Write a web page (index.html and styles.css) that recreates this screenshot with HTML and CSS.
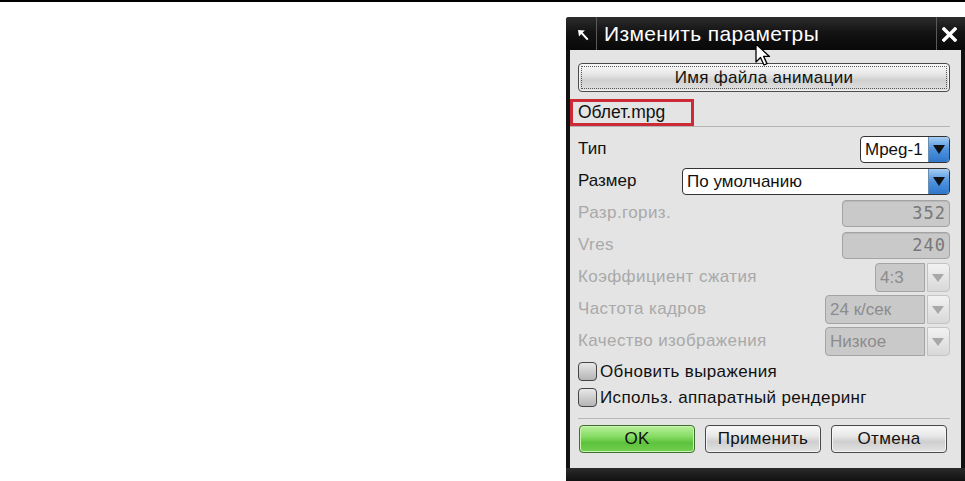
FILE: index.html
```html
<!DOCTYPE html>
<html lang="ru">
<head>
    <meta charset="UTF-8">
    <title>Изменить параметры</title>
    <link rel="stylesheet" href="styles.css">
</head>
<body>
    <div class="page">
        <div class="dialog">
            <!-- Title bar -->
            <div class="titlebar">
                <span class="pin">
                    <svg width="13" height="12" viewBox="0 0 13 12">
                        <path d="M1 1 L8 1.5 L5.6 3.6 L11.5 10 L10 11.3 L4.2 5 L2 7.5 Z" fill="#fff"/>
                    </svg>
                </span>
                <span class="title">Изменить параметры</span>
                <span class="close">
                    <svg width="15" height="15" viewBox="0 0 15 15">
                        <path d="M2 2 L13 13 M13 2 L2 13" stroke="#fff" stroke-width="3.4" stroke-linecap="square"/>
                    </svg>
                </span>
            </div>

            <!-- Dialog body -->
            <div class="body">
                <button class="btn btn-wide">Имя файла анимации</button>

                <div class="file-row">
                    <span class="file-name">Облет.mpg</span>
                </div>

                <div class="rows">
                    <div class="row">
                        <span class="label">Тип</span>
                        <div class="select w-type">
                            <span class="value">Mpeg-1</span>
                            <span class="arrow"></span>
                        </div>
                    </div>
                    <div class="row">
                        <span class="label">Размер</span>
                        <div class="select w-size">
                            <span class="value">По умолчанию</span>
                            <span class="arrow"></span>
                        </div>
                    </div>
                    <div class="row">
                        <span class="label off">Разр.гориз.</span>
                        <div class="field">352</div>
                    </div>
                    <div class="row">
                        <span class="label off">Vres</span>
                        <div class="field">240</div>
                    </div>
                    <div class="row">
                        <span class="label off">Коэффициент сжатия</span>
                        <div class="select-off w-ratio">
                            <span class="value">4:3</span>
                            <span class="arrow"></span>
                        </div>
                    </div>
                    <div class="row">
                        <span class="label off">Частота кадров</span>
                        <div class="select-off w-fps">
                            <span class="value">24 к/сек</span>
                            <span class="arrow"></span>
                        </div>
                    </div>
                    <div class="row">
                        <span class="label off">Качество изображения</span>
                        <div class="select-off w-fps">
                            <span class="value">Низкое</span>
                            <span class="arrow"></span>
                        </div>
                    </div>
                </div>

                <div class="checks">
                    <label class="check"><span class="box"></span>Обновить выражения</label>
                    <label class="check"><span class="box"></span>Использ. аппаратный рендеринг</label>
                </div>

                <div class="actions">
                    <button class="btn btn-ok">OK</button>
                    <button class="btn">Применить</button>
                    <button class="btn">Отмена</button>
                </div>
            </div>
            <div class="footer"></div>

            <!-- mouse pointer captured in the shot -->
            <svg class="cursor" width="17" height="25" viewBox="0 0 17 25">
                <path d="M1 1 L1 19 L5.5 14.5 L9 22 L12 20.6 L8.6 13.4 L14.5 13.4 Z" fill="#fff" stroke="#000" stroke-width="1.3" stroke-linejoin="round"/>
            </svg>
        </div>
    </div>
</body>
</html>
```

FILE: styles.css
```css
/* General */
html, body {
    margin: 0;
    padding: 0;
}

body {
    background: #fff;
    font-family: 'Liberation Sans', Arial, sans-serif;
    height: 481px;
    overflow: hidden;
    border-top: 2px solid #000;
    box-sizing: border-box;
}

.page {
    display: flex;
    justify-content: flex-end;
    padding-top: 15px;
}

/* Dialog frame */
.dialog {
    position: relative;
    width: 399px;
    height: 464px;
    background: #111;
    border-radius: 3px 0 0 0;
    padding: 0 4px 0 4px;
    box-sizing: border-box;
    display: flex;
    flex-direction: column;
}

.titlebar {
    height: 33px;
    display: flex;
    align-items: center;
    background: linear-gradient(#2c2c2c, #141414 45%, #080808);
    margin: 0 -4px;
    padding: 0 4px;
    border-radius: 3px 0 0 0;
}

.pin {
    width: 26px;
    height: 33px;
    display: flex;
    align-items: center;
    justify-content: center;
    border-right: 1px solid #5a5a5a;
    box-sizing: border-box;
    margin-left: 1px;
    padding-top: 2px;
}

.title {
    flex: 1;
    color: #fff;
    font-size: 21px;
    letter-spacing: 0.35px;
    padding-left: 7px;
    padding-top: 1px;
}

.close {
    width: 25px;
    height: 33px;
    border-left: 1px solid #5a5a5a;
    box-sizing: border-box;
    display: flex;
    align-items: center;
    justify-content: center;
    padding-top: 2px;
}

.cursor {
    position: absolute;
    left: 189px;
    top: 26px;
}

/* Body */
.body {
    flex: 1;
    background: #e4e4e4;
    padding: 13px 11px 0 8px;
    display: flex;
    flex-direction: column;
}

.footer {
    height: 13px;
    background: linear-gradient(#2a2a2a, #111);
    margin: 0 -4px;
}

/* Buttons */
.btn {
    font-family: 'Liberation Sans', Arial, sans-serif;
    font-size: 17px;
    letter-spacing: 0.3px;
    color: #111;
    height: 28px;
    padding: 0;
    border: 1px solid #4a4a4a;
    border-radius: 4px;
    background: linear-gradient(#fafafa, #e6e6e6 40%, #cfcfcf 60%, #e2e2e2);
    box-shadow: inset 0 0 0 1px #f4f4f4;
}

.btn-wide {
    width: 100%;
    height: 29px;
    outline: 1px dotted #555;
    outline-offset: -4px;
}

.btn-ok {
    background: linear-gradient(#b8f09c, #86dc64 40%, #5cc23c 65%, #74d052);
    border-color: #3f6f30;
    box-shadow: inset 0 0 0 1px #c8f4b0;
}

/* Filename row */
.file-row {
    display: flex;
    margin: 7px 0 0 -8px;
    border-bottom: 1px solid #b4b4b4;
    height: 27px;
}

.file-name {
    border: 3px solid #cc2a36;
    height: 27px;
    box-sizing: border-box;
    width: 124px;
    font-size: 17.5px;
    line-height: 21px;
    padding-left: 5px;
    color: #111;
}

/* Parameter rows */
.rows {
    display: flex;
    flex-direction: column;
    gap: 4px;
    margin-top: 8px;
}

.row {
    height: 28px;
    display: flex;
    align-items: center;
    justify-content: space-between;
}

.label {
    font-size: 17px;
    color: #111;
}

.label.off {
    color: #a9a9a9;
    letter-spacing: 0.4px;
}

.select {
    height: 27px;
    box-sizing: border-box;
    border: 1px solid #333;
    border-radius: 4px;
    background: #fff;
    display: flex;
    overflow: hidden;
}

.select .value {
    flex: 1;
    font-size: 17px;
    line-height: 25px;
    padding-left: 4px;
    color: #111;
}

.select .arrow {
    width: 20px;
    border-left: 1px solid #6a8cb0;
    background: linear-gradient(#a6cdf4, #4d93de 50%, #2f76cc);
    position: relative;
}

.arrow::after {
    content: "";
    position: absolute;
    left: 4px;
    top: 8px;
    border-left: 6px solid transparent;
    border-right: 6px solid transparent;
    border-top: 9px solid #111;
}

.w-type { width: 90px; }
.w-size { width: 268px; }
.w-ratio { width: 75px; }
.w-fps { width: 125px; }

.field {
    width: 108px;
    height: 27px;
    box-sizing: border-box;
    border: 1px solid #a4a4a4;
    border-radius: 4px;
    background: #c9c9c9;
    box-shadow: inset 0 1px 0 #b8b8b8;
    font-family: 'DejaVu Sans Mono', monospace;
    font-size: 17px;
    letter-spacing: 1px;
    line-height: 25px;
    text-align: right;
    padding-right: 3px;
    color: #787878;
}

.select-off {
    height: 29px;
    display: flex;
    gap: 2px;
}

.select-off .value {
    flex: 1;
    border: 1px solid #a4a4a4;
    border-radius: 4px 0 0 4px;
    background: #c9c9c9;
    font-size: 17px;
    line-height: 27px;
    padding-left: 4px;
    color: #8c8c8c;
}

.select-off .arrow {
    width: 21px;
    border: 1px solid #c4c4c4;
    border-radius: 0 4px 4px 0;
    background: linear-gradient(#f2f2f2, #d8d8d8);
    position: relative;
}

.select-off .arrow::after {
    left: 4px;
    top: 10px;
    border-left-width: 6px;
    border-right-width: 6px;
    border-top: 8px solid #a8a8a8;
}

/* Checkboxes */
.checks {
    display: flex;
    flex-direction: column;
    gap: 5px;
    margin-top: 6px;
    padding-bottom: 10px;
    border-bottom: 1px solid #b8b8b8;
}

.check {
    display: flex;
    align-items: center;
    height: 21px;
    font-size: 17px;
    letter-spacing: 0.35px;
    color: #111;
}

.box {
    width: 19px;
    height: 19px;
    box-sizing: border-box;
    border: 1px solid #444;
    border-radius: 4px;
    background: linear-gradient(#e8e8e8, #b4b4b4);
    margin-right: 3px;
}

/* Bottom buttons */
.actions {
    display: flex;
    justify-content: space-between;
    margin-top: 6px;
    padding-left: 1px;
    padding-right: 3px;
}

.actions .btn {
    width: 116px;
}
```
